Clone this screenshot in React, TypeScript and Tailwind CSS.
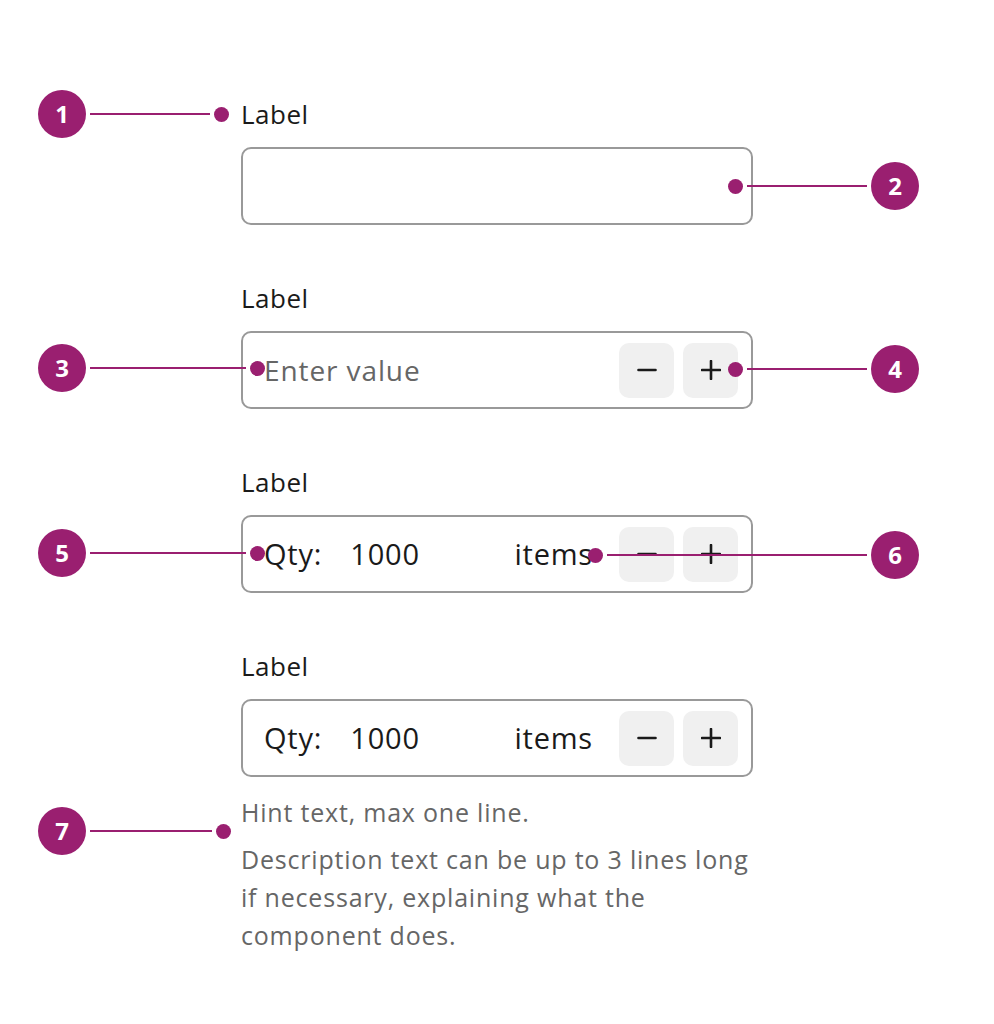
import React from "react";

const font = "font-['Open_Sans','Lato',sans-serif]";

function MinusIcon() {
  return (
    <svg width="20" height="20" viewBox="0 0 20 20" fill="none">
      <path d="M1.5 10h17" stroke="#1a1a1a" strokeWidth="2.6" strokeLinecap="round" />
    </svg>
  );
}

function PlusIcon() {
  return (
    <svg width="20" height="20" viewBox="0 0 20 20" fill="none">
      <path d="M1 10h18M10 1v18" stroke="#1a1a1a" strokeWidth="2.6" strokeLinecap="round" />
    </svg>
  );
}

function Stepper() {
  return (
    <div className="ml-auto flex items-center gap-[9px]">
      <button className="flex h-[55px] w-[55px] items-center justify-center rounded-[10px] bg-[#f0f0f0]">
        <MinusIcon />
      </button>
      <button className="flex h-[55px] w-[55px] items-center justify-center rounded-[10px] bg-[#f0f0f0]">
        <PlusIcon />
      </button>
    </div>
  );
}

function FieldLabel() {
  return (
    <div className="text-[26px] font-medium leading-[32px] tracking-[0.5px] text-[#1a1a1a]">Label</div>
  );
}

function Box({ children }: { children?: React.ReactNode }) {
  return (
    <div className="mt-[17px] flex h-[78px] w-[512px] items-center rounded-[10px] border-2 border-[#999999] pl-[21px] pr-[13px]">
      {children}
    </div>
  );
}

function QtyContent() {
  return (
    <>
      <span className="text-[29px] tracking-[0.8px] text-[#1a1a1a]">Qty:</span>
      <span className="ml-[28px] flex-1 text-[29px] tracking-[0.8px] text-[#1a1a1a]">1000</span>
      <span className="text-[29px] tracking-[0.8px] text-[#1a1a1a]">items</span>
      <div className="ml-[26px]">
        <Stepper />
      </div>
    </>
  );
}

function Badge({ n }: { n: number }) {
  return (
    <div className="flex h-[48px] w-[48px] shrink-0 items-center justify-center rounded-full bg-[#9a1f70] text-[24px] font-bold text-white">
      {n}
    </div>
  );
}

const Line = ({ w }: { w: string }) => <div className={`h-[2px] bg-[#9a1f70] ${w}`} />;
const Dot = () => <div className="h-[15px] w-[15px] shrink-0 rounded-full bg-[#9a1f70]" />;

export default function App() {
  return (
    <div className={`relative h-[1024px] w-[994px] bg-white ${font}`}>
      <div className="flex flex-col gap-[57px] pl-[241px] pt-[98px]">
        <div className="flex flex-col">
          <FieldLabel />
          <Box />
        </div>
        <div className="flex flex-col">
          <FieldLabel />
          <Box>
            <span className="text-[28px] tracking-[0.9px] text-[#666666]">Enter value</span>
            <Stepper />
          </Box>
        </div>
        <div className="flex flex-col">
          <FieldLabel />
          <Box>
            <QtyContent />
          </Box>
        </div>
        <div className="flex flex-col">
          <FieldLabel />
          <Box>
            <QtyContent />
          </Box>
          <p className="mt-[16px] text-[25px] leading-[38px] tracking-[0.8px] text-[#666666]">
            Hint text, max one line.
          </p>
          <p className="mt-[9px] w-[515px] text-[25px] leading-[38px] tracking-[0.8px] text-[#666666]">
            Description text can be up to 3 lines long if necessary, explaining what the component does.
          </p>
        </div>
      </div>

      {/* callouts on the left */}
      <div className="absolute left-[38px] top-[90px] flex items-center gap-[4px]">
        <Badge n={1} />
        <Line w="w-[120px]" />
        <Dot />
      </div>
      <div className="absolute left-[38px] top-[344px] flex items-center gap-[4px]">
        <Badge n={3} />
        <Line w="w-[156px]" />
        <Dot />
      </div>
      <div className="absolute left-[38px] top-[529px] flex items-center gap-[4px]">
        <Badge n={5} />
        <Line w="w-[156px]" />
        <Dot />
      </div>
      <div className="absolute left-[38px] top-[807px] flex items-center gap-[4px]">
        <Badge n={7} />
        <Line w="w-[122px]" />
        <Dot />
      </div>

      {/* callouts on the right */}
      <div className="absolute left-[728px] top-[162px] flex items-center gap-[4px]">
        <Dot />
        <Line w="w-[120px]" />
        <Badge n={2} />
      </div>
      <div className="absolute left-[728px] top-[345px] flex items-center gap-[4px]">
        <Dot />
        <Line w="w-[120px]" />
        <Badge n={4} />
      </div>
      <div className="absolute left-[588px] top-[531px] flex items-center gap-[4px]">
        <Dot />
        <Line w="w-[260px]" />
        <Badge n={6} />
      </div>
    </div>
  );
}
